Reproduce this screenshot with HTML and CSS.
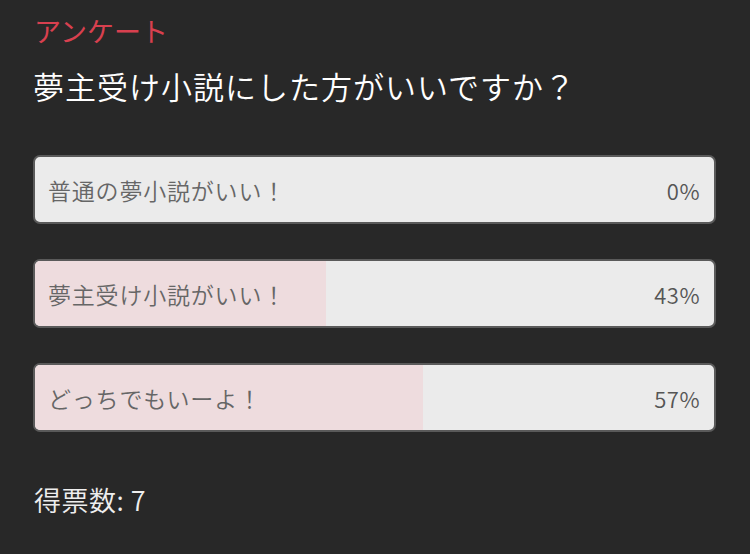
FILE: index.html
```html
<!DOCTYPE html>
<html lang="ja">
<head>
<meta charset="utf-8">
<link rel="stylesheet" href="styles.css">
</head>
<body>
<div class="poll">
  <div class="poll-label">アンケート</div>
  <div class="poll-question">夢主受け小説にした方がいいですか？</div>
  <div class="poll-options">
    <div class="option">
      <div class="option-fill" style="width:0%"></div>
      <span class="option-text">普通の夢小説がいい！</span>
      <span class="option-pct">0%</span>
    </div>
    <div class="option">
      <div class="option-fill" style="width:42.8%"></div>
      <span class="option-text">夢主受け小説がいい！</span>
      <span class="option-pct">43%</span>
    </div>
    <div class="option">
      <div class="option-fill" style="width:57.2%"></div>
      <span class="option-text">どっちでもいーよ！</span>
      <span class="option-pct">57%</span>
    </div>
  </div>
  <div class="poll-votes">得票数: 7</div>
</div>
</body>
</html>
```

FILE: styles.css
```css
html, body {
  margin: 0;
  padding: 0;
  background: #282828;
}
body {
  font-family: "Noto Sans CJK JP", "Noto Sans", sans-serif;
  font-weight: 350;
}
.poll {
  padding: 12px 33px 0 33px;
  display: flex;
  flex-direction: column;
}
.poll-label {
  color: #d8404f;
  font-size: 27px;
  font-weight: 400;
  line-height: 38px;
  padding-left: 1px;
}
.poll-question {
  color: #ffffff;
  font-size: 31px;
  line-height: 44px;
  letter-spacing: 1px;
  margin-top: 14px;
}
.poll-options {
  margin-top: 47px;
  display: flex;
  flex-direction: column;
  gap: 35px;
  width: 683px;
}
.option {
  position: relative;
  box-sizing: border-box;
  height: 69px;
  border: 2px solid #5a5a5a;
  border-radius: 7px;
  background: #ebebeb;
  overflow: hidden;
  display: flex;
  align-items: center;
  justify-content: space-between;
  padding: 0 14px 0 13px;
}
.option-fill {
  position: absolute;
  left: 0;
  top: 0;
  bottom: 0;
  background: #eedcde;
}
.option-text {
  position: relative;
  color: #666666;
  font-size: 23px;
  letter-spacing: 0.8px;
}
.option-pct {
  position: relative;
  color: #555555;
  font-size: 22px;
  letter-spacing: 0.5px;
}
.poll-votes {
  margin-top: 50px;
  color: #eeeeee;
  font-size: 27px;
  line-height: 36px;
  letter-spacing: 0.5px;
  padding-left: 1px;
}
```
